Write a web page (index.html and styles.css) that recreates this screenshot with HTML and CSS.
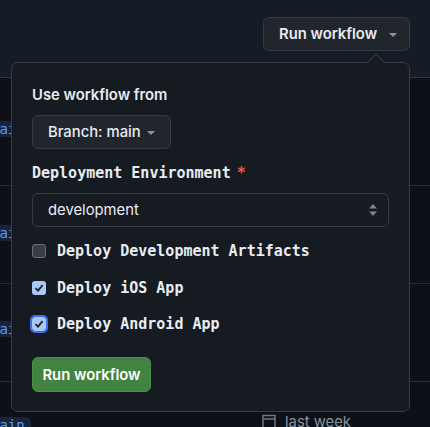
FILE: index.html
```html
<!DOCTYPE html>
<html>
<head>
<meta charset="utf-8">
<link rel="stylesheet" href="styles.css">
</head>
<body>
<div class="page">
  <header class="header">
    <button class="btn btn-run">Run workflow <span class="caret"></span></button>
  </header>
  <div class="runs">
    <div class="run run-1"><span class="chip">main</span></div>
    <div class="run run-2"><span class="chip">main</span></div>
    <div class="run run-3"><span class="chip">main</span></div>
    <div class="run run-4">
      <span class="chip">main</span>
      <span class="meta">
        <svg class="cal" width="16" height="16" viewBox="0 0 16 16"><path d="M2 1.5h12v13H2z M2 5h12" fill="none" stroke="#6e7681" stroke-width="1.5"/></svg>
        last week
      </span>
    </div>
  </div>

  <div class="popup">
    <span class="popup-arrow"></span>
    <div class="label">Use workflow from</div>
    <button class="btn btn-branch">Branch: main <span class="caret"></span></button>
    <div class="input-label">Deployment Environment<span class="req">*</span></div>
    <div class="select">
      <span>development</span>
      <svg class="updown" width="10" height="14" viewBox="0 0 10 14"><path d="M5 1 9 5.5H1z M5 13 1 8.5h8z" fill="#7d8590"/></svg>
    </div>
    <label class="check"><span class="box"></span>Deploy Development Artifacts</label>
    <label class="check check-2"><span class="box on"><svg width="14" height="14" viewBox="0 0 14 14"><path d="M3.5 7.2 6 9.6 10.6 4.2" fill="none" stroke="#222" stroke-width="1.8"/></svg></span>Deploy iOS App</label>
    <label class="check check-3"><span class="box on focus"><svg width="14" height="14" viewBox="0 0 14 14"><path d="M3.5 7.2 6 9.6 10.6 4.2" fill="none" stroke="#222" stroke-width="1.8"/></svg></span>Deploy Android App</label>
    <button class="btn btn-green">Run workflow</button>
  </div>
</div>
</body>
</html>
```

FILE: styles.css
```css
* { box-sizing: border-box; }
html, body { margin: 0; padding: 0; }
body {
  background: #0d1117;
  font-family: Inter, "Noto Sans", "Liberation Sans", sans-serif;
  color: #e6edf3;
  width: 430px;
  height: 427px;
  overflow: hidden;
}
.page { position: relative; width: 430px; height: 427px; }

.header {
  height: 78px;
  background: #161b28;
  border-bottom: 1px solid #1f3a63;
  display: flex;
  justify-content: flex-end;
  align-items: flex-start;
  padding: 17px 20px 0 0;
}

.btn {
  font-family: inherit;
  font-size: 14.8px;
  font-weight: 600;
  color: #e6edf3;
  background: #21262d;
  border: 1px solid #363b42;
  border-radius: 6px;
  display: inline-flex;
  align-items: center;
  cursor: pointer;
  padding: 0;
}
.btn-run {
  width: 147px;
  height: 34px;
  padding-left: 15px;
  gap: 12px;
}
.caret {
  width: 0; height: 0;
  border-left: 4.5px solid transparent;
  border-right: 4.5px solid transparent;
  border-top: 4.5px solid #8b949e;
  margin-top: 1px;
}

.runs { display: flex; flex-direction: column; }
.run {
  border-bottom: 1px solid #262c35;
  position: relative;
  display: flex;
  align-items: flex-start;
}
.run-1 { height: 108px; padding-top: 43px; }
.run-2 { height: 98px; padding-top: 39px; }
.run-3 { height: 98px; padding-top: 37px; }
.run-4 { height: 60px; padding-top: 35px; }
.chip {
  font-family: "DejaVu Sans Mono", monospace;
  font-size: 14px;
  line-height: 16px;
  color: #5d9cf5;
  background: #17243a;
  border-radius: 6px;
  padding: 0 6px;
  margin-left: -15px;
}
.meta {
  position: absolute;
  left: 261px;
  top: 31px;
  display: flex;
  align-items: center;
  gap: 8px;
  font-size: 14.8px;
  color: #8b949e;
}

.popup {
  position: absolute;
  left: 11px;
  top: 62px;
  width: 399px;
  height: 350px;
  background: #161a21;
  border: 1px solid #373d45;
  border-radius: 7px;
  padding: 22px 20px 0 20px;
  display: flex;
  flex-direction: column;
  align-items: flex-start;
}
.popup-arrow {
  position: absolute;
  top: -7px;
  left: 358px;
  width: 12px;
  height: 12px;
  background: #161a21;
  border-left: 1px solid #373d45;
  border-top: 1px solid #373d45;
  transform: rotate(45deg);
}
.label {
  font-size: 14.8px;
  font-weight: 600;
  line-height: 20px;
}
.btn-branch {
  margin-top: 10px;
  width: 139px;
  height: 34px;
  padding-left: 15px;
  gap: 6px;
  font-weight: 500;
}
.input-label {
  margin-top: 14px;
  font-family: "DejaVu Sans Mono", monospace;
  font-size: 15px;
  font-weight: 700;
  line-height: 20px;
  display: flex;
  align-items: center;
  gap: 6px;
}
.req { color: #f85149; font-size: 15px; font-weight: 700; }
.select {
  margin-top: 10px;
  width: 357px;
  height: 34px;
  border: 1px solid #373d45;
  border-radius: 6px;
  background: #161a21;
  display: flex;
  align-items: center;
  justify-content: space-between;
  padding: 0 10px 0 15px;
  font-size: 14.8px;
}
.check {
  display: flex;
  align-items: center;
  gap: 11px;
  height: 20px;
  margin-top: 14px;
  font-family: "DejaVu Sans Mono", monospace;
  font-size: 15px;
  font-weight: 700;
}
.check-2 { margin-top: 17px; }
.check-3 { margin-top: 16px; }
.box {
  width: 14px;
  height: 14px;
  border-radius: 3px;
  background: #3a3d42;
  border: 1px solid #6e7175;
  display: flex;
  align-items: center;
  justify-content: center;
}
.box.on {
  background: #a8c7fa;
  border: none;
}
.box.focus {
  outline: 2px solid #3e6ee8;
  outline-offset: 0;
}
.box svg { display: block; }
.btn-green {
  margin-top: 23px;
  width: 119px;
  height: 35px;
  justify-content: center;
  background: #428341;
  border: 1px solid #4c8f4a;
  color: #ffffff;
}
```
